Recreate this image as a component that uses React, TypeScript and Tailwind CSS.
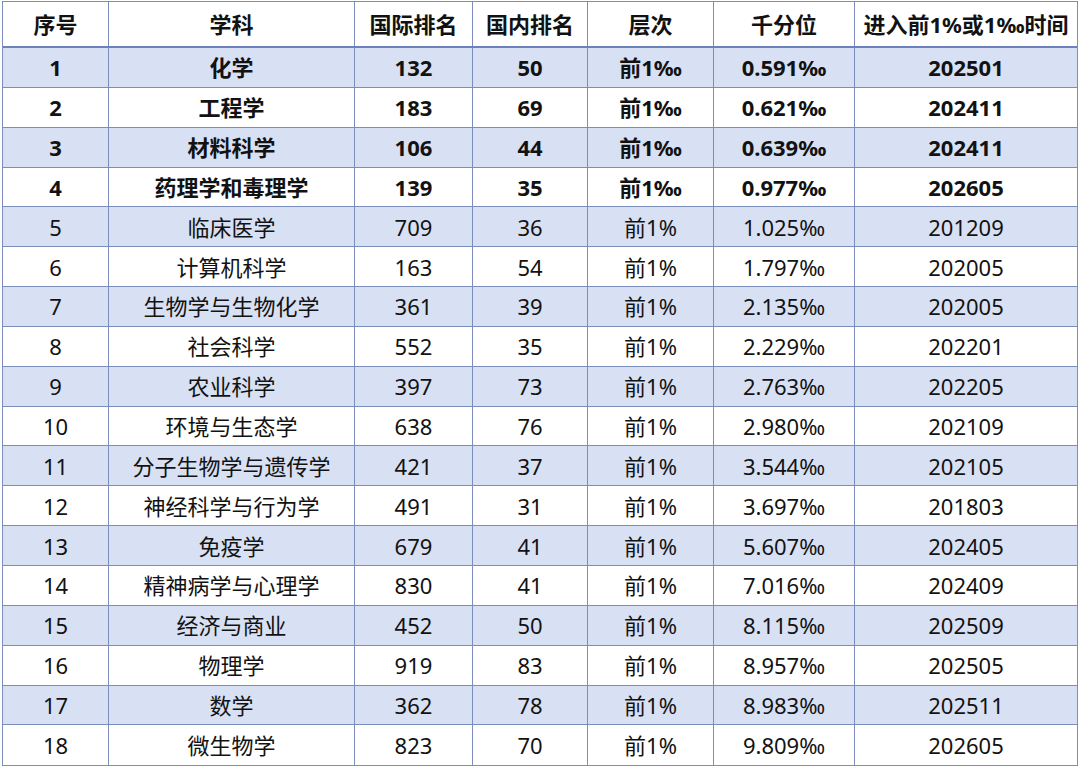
import React from "react";

type Row = [string, string, string, string, string, string, string];

const rows: Row[] = [
  ["1", "化学", "132", "50", "前1‰", "0.591‰", "202501"],
  ["2", "工程学", "183", "69", "前1‰", "0.621‰", "202411"],
  ["3", "材料科学", "106", "44", "前1‰", "0.639‰", "202411"],
  ["4", "药理学和毒理学", "139", "35", "前1‰", "0.977‰", "202605"],
  ["5", "临床医学", "709", "36", "前1%", "1.025‰", "201209"],
  ["6", "计算机科学", "163", "54", "前1%", "1.797‰", "202005"],
  ["7", "生物学与生物化学", "361", "39", "前1%", "2.135‰", "202005"],
  ["8", "社会科学", "552", "35", "前1%", "2.229‰", "202201"],
  ["9", "农业科学", "397", "73", "前1%", "2.763‰", "202205"],
  ["10", "环境与生态学", "638", "76", "前1%", "2.980‰", "202109"],
  ["11", "分子生物学与遗传学", "421", "37", "前1%", "3.544‰", "202105"],
  ["12", "神经科学与行为学", "491", "31", "前1%", "3.697‰", "201803"],
  ["13", "免疫学", "679", "41", "前1%", "5.607‰", "202405"],
  ["14", "精神病学与心理学", "830", "41", "前1%", "7.016‰", "202409"],
  ["15", "经济与商业", "452", "50", "前1%", "8.115‰", "202509"],
  ["16", "物理学", "919", "83", "前1%", "8.957‰", "202505"],
  ["17", "数学", "362", "78", "前1%", "8.983‰", "202511"],
  ["18", "微生物学", "823", "70", "前1%", "9.809‰", "202605"],
];

const headers = ["序号", "学科", "国际排名", "国内排名", "层次", "千分位", "进入前1%或1‰时间"];

const gridCols = "grid grid-cols-[106px_246px_118px_115px_126px_141px_222px]";

export default function App() {
  return (
    <div className="w-[1080px] h-[767px] bg-white pl-[2px] pt-[1px] overflow-hidden">
      <div
        className="w-[1076px] border border-[#7a8dbb] text-[#121212] text-[22px] leading-none"
        style={{ fontFamily: '"Noto Sans", "Noto Sans CJK SC", sans-serif' }}
      >
        <div className={`${gridCols} h-[46px] border-b-2 border-[#6c82b8] bg-white font-bold`}>
          {headers.map((h, i) => (
            <div
              key={i}
              className={`flex items-center justify-center whitespace-nowrap ${i < 6 ? "border-r border-[#7a8dbb]" : ""}`}
            >
              {h}
            </div>
          ))}
        </div>
        {rows.map((r, ri) => (
          <div
            key={ri}
            className={`${gridCols} h-[39.85px] ${ri < rows.length - 1 ? "border-b border-[#7a8dbb]" : ""} ${
              ri % 2 === 0 ? "bg-[#d8e0f3]" : "bg-white"
            } ${ri < 4 ? "font-bold" : "font-normal"}`}
          >
            {r.map((c, ci) => (
              <div
                key={ci}
                className={`flex items-center justify-center whitespace-nowrap ${ci < 6 ? "border-r border-[#7a8dbb]" : ""}`}
              >
                {c}
              </div>
            ))}
          </div>
        ))}
      </div>
    </div>
  );
}
